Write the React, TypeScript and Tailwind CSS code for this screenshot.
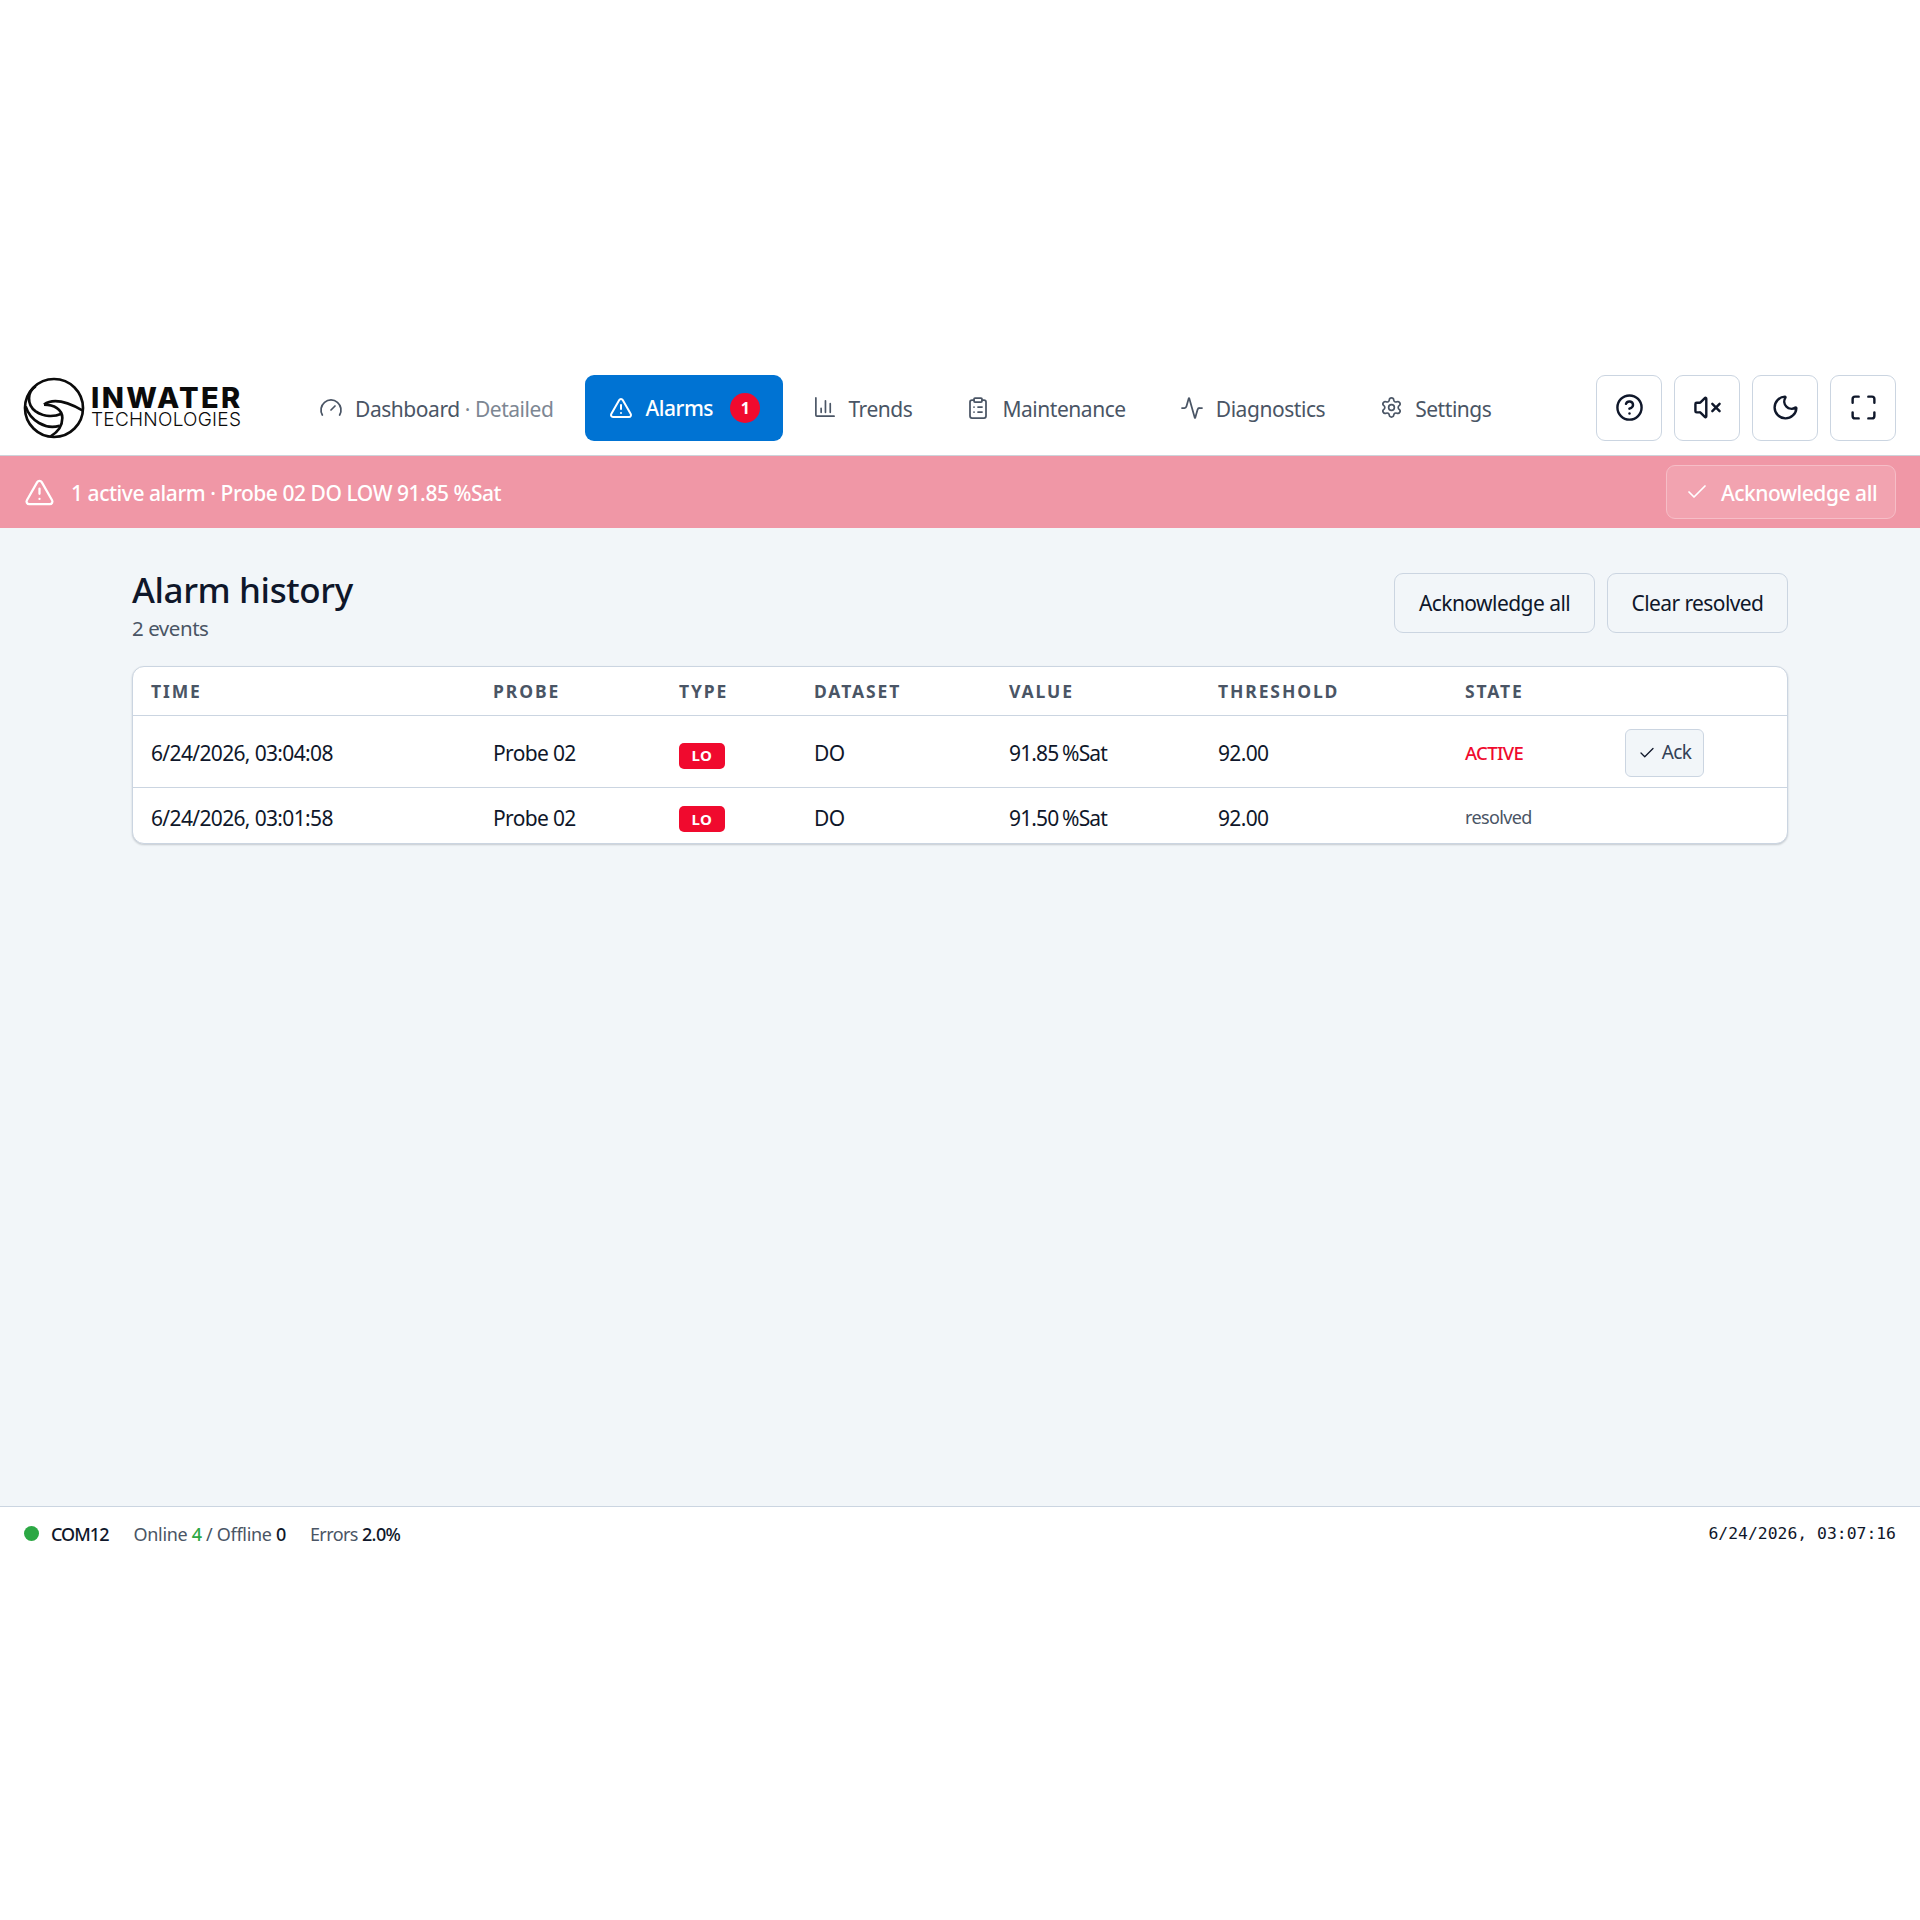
import { Gauge, TriangleAlert, ClipboardList, Activity, Settings, CircleHelp, VolumeX, Moon, Maximize, Check } from "lucide-react";

function TrendIcon() {
  return (
    <svg width="23" height="23" viewBox="0 0 24 24" fill="none" stroke="currentColor" strokeWidth="1.75" strokeLinecap="round" strokeLinejoin="round">
      <path d="M3 2v18a1 1 0 0 0 1 1h18" />
      <path d="M8.5 17v-4" />
      <path d="M13 17V5" />
      <path d="M18 17V8" />
    </svg>
  );
}

function Logo() {
  return (
    <div className="flex items-center w-[218px] h-[62px] shrink-0">
      <svg width="62" height="62" viewBox="12 12 186 186" fill="none" stroke="#0b0b0b" strokeWidth="8" className="shrink-0">
        <circle cx="105" cy="105" r="87" />
        <path d="M75 95C95 80 130 78 190 112" />
        <path d="M75 95C105 95 130 110 130 135C130 160 115 178 95 190" />
        <path d="M50 40C25 55 22 95 50 115C75 132 105 132 128 122" />
        <path d="M20 100C33 142 80 172 122 158" />
      </svg>
      <div className="ml-[6px] flex flex-col font-['Inter',sans-serif] text-[#0b0b0b]">
        <span className="text-[29px] leading-[24px] font-extrabold tracking-[2.35px]">INWATER</span>
        <span className="text-[19px] leading-[19px] font-light tracking-[0.25px]">TECHNOLOGIES</span>
      </div>
    </div>
  );
}

function NavItem({ icon, children, className }: { icon: React.ReactNode; children: React.ReactNode; className: string }) {
  return (
    <div className={`flex items-center gap-[12px] h-[66px] text-[#4a5565] ${className}`}>
      {icon}
      <span className="pt-[4px]">{children}</span>
    </div>
  );
}

function IconButton({ children }: { children: React.ReactNode }) {
  return (
    <button className="w-[66px] h-[66px] flex items-center justify-center rounded-[9px] border border-[#cbd5e1] bg-white text-[#0f172a]">
      {children}
    </button>
  );
}

const headers = [
  ["TIME", "w-[342px]"],
  ["PROBE", "w-[186px]"],
  ["TYPE", "w-[135px]"],
  ["DATASET", "w-[195px]"],
  ["VALUE", "w-[209px]"],
  ["THRESHOLD", "w-[247px]"],
  ["STATE", "w-[160px]"],
  ["", ""],
];

function Badge() {
  return (
    <span className="inline-flex items-center justify-center w-[46px] h-[26px] rounded-[5px] bg-[#f00a2e] text-white text-[15px] font-bold tracking-[0.5px]">
      LO
    </span>
  );
}

export default function App() {
  return (
    <div className="min-h-[1920px] flex items-center bg-white font-['Noto_Sans',sans-serif] tracking-[-0.45px]">
      <div className="w-full h-[1200px] flex flex-col">
        <header className="h-[96px] shrink-0 flex items-center pl-[23px] pr-[24px] border-b border-[#cdd3da] bg-white text-[21px]">
          <Logo />
          <nav className="flex items-center ml-[78px]">
            <NavItem icon={<Gauge size={24} strokeWidth={1.75} />} className="">
              Dashboard <span className="text-[#7d8793]">· Detailed</span>
            </NavItem>
            <div className="ml-[32px] w-[198px] h-[66px] flex items-center pl-[24px] rounded-[9px] bg-[#0073d3] text-white font-medium">
              <TriangleAlert size={24} strokeWidth={2} />
              <span className="ml-[12px] pt-[3px]">Alarms</span>
              <span className="ml-[17px] w-[30px] h-[30px] rounded-full bg-[#f00a2e] flex items-center justify-center text-[16px] font-bold">1</span>
            </div>
            <NavItem icon={<TrendIcon />} className="ml-[30px]">Trends</NavItem>
            <NavItem icon={<ClipboardList size={24} strokeWidth={1.75} />} className="ml-[54px]">Maintenance</NavItem>
            <NavItem icon={<Activity size={24} strokeWidth={1.75} />} className="ml-[54px]">Diagnostics</NavItem>
            <NavItem icon={<Settings size={23} strokeWidth={1.75} />} className="ml-[55px]">Settings</NavItem>
          </nav>
          <div className="ml-auto flex gap-[12px]">
            <IconButton><CircleHelp size={29} strokeWidth={2} /></IconButton>
            <IconButton><VolumeX size={29} strokeWidth={2} /></IconButton>
            <IconButton><Moon size={29} strokeWidth={2} /></IconButton>
            <IconButton><Maximize size={29} strokeWidth={2} /></IconButton>
          </div>
        </header>

        <div className="h-[72px] shrink-0 flex items-center justify-between pl-[24px] pr-[24px] bg-[#f097a6] text-white text-[21px] font-medium">
          <div className="flex items-center">
            <TriangleAlert size={31} strokeWidth={1.75} />
            <span className="ml-[16px] pt-[3px]">1 active alarm · Probe 02 DO LOW 91.85 %Sat</span>
          </div>
          <button className="w-[230px] h-[54px] flex items-center justify-center gap-[12px] rounded-[9px] border border-[#f6bec7] bg-[#f2a3b0]">
            <Check size={24} strokeWidth={1.75} />
            <span className="pt-[3px]">Acknowledge all</span>
          </button>
        </div>

        <main className="flex-1 bg-[#f2f6f9] px-[132px] pt-[44px]">
          <div className="flex justify-between items-start">
            <div>
              <h1 className="text-[35px] leading-[36px] font-medium tracking-[-0.4px] text-[#0f172a]">Alarm history</h1>
              <p className="text-[20.5px] leading-[28px] mt-[6px] text-[#4a5565]">2 events</p>
            </div>
            <div className="flex gap-[12px] mt-[1px]">
              <button className="w-[201px] h-[60px] pt-[2px] rounded-[9px] border border-[#cbd5e1] text-[21px] tracking-[-0.55px] text-[#0f172a]">Acknowledge all</button>
              <button className="w-[181px] h-[60px] pt-[2px] rounded-[9px] border border-[#cbd5e1] text-[21px] tracking-[-0.6px] text-[#0f172a]">Clear resolved</button>
            </div>
          </div>

          <div className="mt-[24px] rounded-[12px] border border-[#cbd5e1] bg-white shadow-[0_1px_2px_rgba(15,23,42,0.2)] overflow-hidden">
            <table className="w-full border-collapse table-fixed text-[21px] tracking-[-0.65px] text-[#0f172a]">
              <thead>
                <tr className="h-[48px] border-b border-[#cbd5e1]">
                  {headers.map(([h, w]) => (
                    <th key={h} className={`${w} pl-[18px] text-left text-[17.5px] font-bold tracking-[1.9px] text-[#4a5565]`}>{h}</th>
                  ))}
                </tr>
              </thead>
              <tbody>
                <tr className="h-[72px] border-b border-[#cbd5e1]">
                  <td className="pl-[18px] pt-[6px]">6/24/2026, 03:04:08</td>
                  <td className="pl-[18px] pt-[6px]">Probe 02</td>
                  <td className="pl-[18px] pt-[6px]"><Badge /></td>
                  <td className="pl-[18px] pt-[6px]">DO</td>
                  <td className="pl-[18px] pt-[6px] tracking-[-0.85px] [word-spacing:-1px]">91.85 %Sat</td>
                  <td className="pl-[18px] pt-[6px]">92.00</td>
                  <td className="pl-[18px] pt-[4px] text-[18.5px] font-medium text-[#f00a2e]">ACTIVE</td>
                  <td className="pl-[18px] pt-[3px]">
                    <button className="w-[79px] h-[48px] flex items-center justify-center gap-[6px] rounded-[6px] border border-[#cbd5e1] bg-[#f2f6f9] text-[19px] text-[#334155]">
                      <Check size={18} strokeWidth={1.75} className="text-[#0f172a]" />
                      Ack
                    </button>
                  </td>
                </tr>
                <tr className="h-[56px]">
                  <td className="pl-[18px] pt-[6px]">6/24/2026, 03:01:58</td>
                  <td className="pl-[18px] pt-[6px]">Probe 02</td>
                  <td className="pl-[18px] pt-[5px]"><Badge /></td>
                  <td className="pl-[18px] pt-[6px]">DO</td>
                  <td className="pl-[18px] pt-[6px] tracking-[-0.85px] [word-spacing:-1px]">91.50 %Sat</td>
                  <td className="pl-[18px] pt-[6px]">92.00</td>
                  <td className="pl-[18px] pt-[4px] text-[18px] text-[#4a5565]">resolved</td>
                  <td />
                </tr>
              </tbody>
            </table>
          </div>
        </main>

        <footer className="h-[54px] shrink-0 flex items-center justify-between pl-[24px] pr-[24px] border-t border-[#cbd5e1] bg-white text-[18px] text-[#4a5565]">
          <div className="flex items-center pt-[2px]">
            <span className="w-[15px] h-[15px] rounded-full bg-[#2ca844] mt-[-2px]" />
            <span className="ml-[12px] font-medium tracking-[-0.95px] text-[#0f172a]">COM12</span>
            <span className="ml-[25px] tracking-[-0.32px]">Online <b className="font-medium text-[#2ca844]">4</b> / Offline <b className="font-medium text-[#0f172a]">0</b></span>
            <span className="ml-[24px] tracking-[-0.6px]">Errors <b className="font-medium text-[#0f172a]">2.0%</b></span>
          </div>
          <span className="pt-[2px] font-['DejaVu_Sans_Mono',monospace] text-[16.4px] tracking-normal text-[#0f172a]">6/24/2026, 03:07:16</span>
        </footer>
      </div>
    </div>
  );
}
